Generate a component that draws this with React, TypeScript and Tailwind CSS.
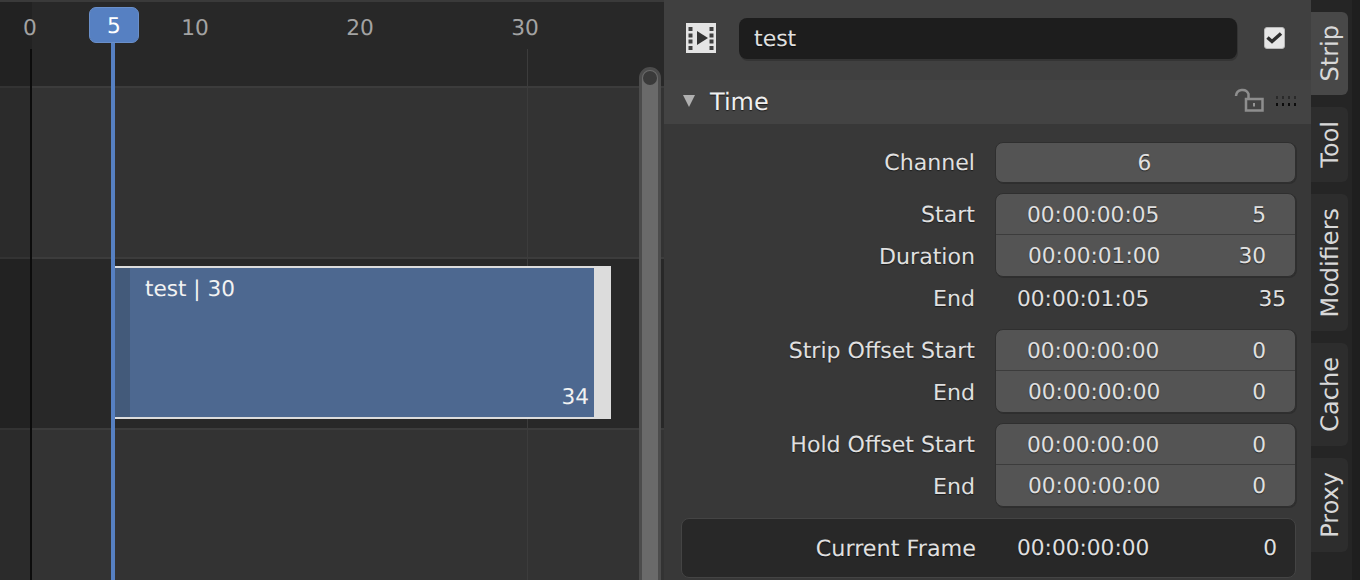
const FONT = "font-['DejaVu_Sans',sans-serif]";

const ticks = [
  { label: '0', left: 'left-[30px]' },
  { label: '10', left: 'left-[195px]' },
  { label: '20', left: 'left-[360px]' },
  { label: '30', left: 'left-[525px]' },
];

const tabs = [
  { name: 'Strip', size: 'h-[83px]', active: true },
  { name: 'Tool', size: 'h-[75px]', active: false },
  { name: 'Modifiers', size: 'h-[137px]', active: false },
  { name: 'Cache', size: 'h-[103px]', active: false },
  { name: 'Proxy', size: 'h-[94px]', active: false },
];

const TEXT = 'text-[#e0e0e0] [text-shadow:0_1px_1px_rgba(0,0,0,0.55)]';

function Label({ children }: { children: string }) {
  return <div className={`w-[331px] shrink-0 pr-[20px] text-right text-[22.1px] ${TEXT}`}>{children}</div>;
}

function Cell({ time, value, second }: { time: string; value: string; second?: boolean }) {
  return (
    <div className={`flex items-center justify-between pr-[29px] ${TEXT} ${second ? 'h-[41px] pl-[32px] pt-[2px]' : 'h-[40px] pl-[31px] pt-[3px]'}`}>
      <span>{time}</span>
      <span>{value}</span>
    </div>
  );
}

function TimeGroup({ rows }: { rows: { label: string; time: string; value: string }[] }) {
  return (
    <div className="flex">
      <div className="flex flex-col">
        {rows.map((r) => (
          <div key={r.label} className="flex h-[42px] items-center pt-[2px]">
            <Label>{r.label}</Label>
          </div>
        ))}
      </div>
      <div className="h-[84px] w-[301px] overflow-hidden rounded-[8px] border border-[#2f2f2f] bg-[#545454] shadow-[1px_1px_0_#2e2e2e]">
        <Cell time={rows[0].time} value={rows[0].value} />
        <div className="h-[1px] bg-[#3c3c3c]" />
        <Cell time={rows[1].time} value={rows[1].value} second />
      </div>
    </div>
  );
}

function FilmIcon() {
  return (
    <svg width="30" height="30" viewBox="0 0 30 30">
      <path
        fill="#e4e4e4"
        fillRule="evenodd"
        d="M0 0h30v30H0zM2.500 4v4h4V4zM2.500 10.500v4h4v-4zM2.500 16.500v4h4v-4zM2.500 23v4h4v-4zM23.500 4v4h4V4zM23.500 10.500v4h4v-4zM23.500 16.500v4h4v-4zM23.500 23v4h4v-4z"
      />
      <path fill="#333333" d="M11 8l11 7-11 7z" />
    </svg>
  );
}

function LockIcon() {
  return (
    <svg width="30" height="26" viewBox="0 0 30 26" fill="none" stroke="#8e8e8e" strokeWidth="2.500">
      <path d="M2 9a6.500 6.500 0 0 1 12.500-2v4" />
      <rect x="12" y="12" width="16.500" height="11.500" />
      <path d="M20 16v3.500" stroke="#b0b0b0" strokeWidth="1.500" />
    </svg>
  );
}

function GripIcon() {
  return (
    <svg width="22" height="13" viewBox="0 0 22 13">
      {[0, 6, 12, 18].map((x) => (
        <g key={x}>
          <rect x={x} y="1" width="2" height="3" fill="#2a2a2a" />
          <rect x={x} y="8" width="2" height="3" fill="#0c0c0c" />
        </g>
      ))}
    </svg>
  );
}

export default function App() {
  return (
    <div className={`flex h-[580px] w-[1360px] overflow-hidden bg-[#383838] text-[21.7px] leading-none [text-rendering:geometricPrecision] ${FONT}`}>
      {/* sequencer timeline */}
      <div className="relative h-full w-[664px] shrink-0 overflow-hidden bg-[#282828]">
        <div className="h-[2px] bg-[#3a3a3a]" />
        <div className="h-[84px] bg-[#282828]" />
        <div className="h-[2px] bg-[#3c3c3c]" />
        <div className="h-[169px] bg-[#333333]" />
        <div className="h-[2px] bg-[#3c3c3c]" />
        <div className="h-[169px] bg-[#282828]" />
        <div className="h-[2px] bg-[#3c3c3c]" />
        <div className="h-[150px] bg-[#333333]" />

        <div className="absolute left-0 top-[2px] h-full w-[32px] bg-black/15" />
        <div className="absolute bottom-0 left-[527px] top-[49px] w-[1px] bg-[#3c3c3c]" />
        <div className="absolute bottom-0 left-[30px] top-[49px] w-[2px] bg-[#0c0c0c]" />

        {ticks.map((t) => (
          <div key={t.label} className={`absolute top-[18px] -translate-x-1/2 text-[#a3a3a3] ${t.left}`}>
            {t.label}
          </div>
        ))}

        {/* strip */}
        <div className="absolute left-[114px] top-[266px] flex h-[153px] w-[497px] border-y-2 border-[#dcdcdc] bg-[#dcdcdc]">
          <div className="h-full w-[16px] bg-[#435a7a]" />
          <div className="relative h-full w-[464px] bg-[#4d6890] text-[21.6px] text-[#f2f2f2]">
            <div className="absolute left-[15px] top-[11px]">test | 30</div>
            <div className="absolute bottom-[8px] right-[5px]">34</div>
          </div>
        </div>

        {/* playhead */}
        <div className="absolute bottom-0 left-[111px] top-[40px] w-[4px] bg-[#5680c2]" />
        <div className="absolute left-[89px] top-[7px] flex h-[36px] w-[50px] items-center justify-center rounded-[7px] border border-[#6a8fc9] bg-[#5680c2] pt-[4px] text-white">
          5
        </div>

        {/* scrollbar */}
        <div className="absolute left-[639px] top-[67px] h-[530px] w-[22px] rounded-full border-[3px] border-[#4c4c4c] bg-[#6a6a6a]">
          <div className="absolute left-[1px] top-[1px] h-[14px] w-[14px] rounded-full bg-[#3a3a3a]" />
        </div>
      </div>

      {/* sidebar */}
      <div className="flex h-full w-[647px] shrink-0 flex-col">
        <div className="flex h-[80px] shrink-0 items-start bg-[#404040]">
          <div className="ml-[22px] mt-[23px]">
            <FilmIcon />
          </div>
          <div className={`ml-[23px] mt-[18px] flex h-[41px] w-[498px] items-center rounded-[8px] bg-[#1d1d1d] pl-[15px] pt-[2px] text-[22px] shadow-[1px_2px_0_#343434] ${TEXT}`}>
            test
          </div>
          <div className="ml-[27px] mt-[27px] flex h-[22px] w-[21px] items-center justify-center rounded-[3px] border border-[#b8b8b8] bg-[#e6e6e6]">
            <svg width="17" height="12" viewBox="0 0 17 12" fill="none" stroke="#2e2e2e" strokeWidth="3.500">
              <path d="M1.500 5.500l4.500 4 9-8" />
            </svg>
          </div>
        </div>

        <div className="relative flex h-[44px] shrink-0 items-center bg-[#434343] pl-[46px] text-[24px] text-[#f0f0f0] [text-shadow:0_1px_1px_rgba(0,0,0,0.6)]">
          <svg className="absolute left-[19px] top-[15px]" width="12" height="12" viewBox="0 0 12 12">
            <path fill="#b0b0b0" d="M0 0h12l-6 12z" />
          </svg>
          Time
          <div className="absolute left-[570px] top-[7px]">
            <LockIcon />
          </div>
          <div className="absolute left-[612px] top-[15px]">
            <GripIcon />
          </div>
        </div>

        <div className="flex flex-1 flex-col pt-[18px]">
          <div className="flex h-[41px] items-center">
            <div className="pt-[2px]">
              <Label>Channel</Label>
            </div>
            <div className={`flex h-[41px] w-[301px] items-center justify-center rounded-[8px] border border-[#2f2f2f] bg-[#545454] pr-[2px] pt-[2px] shadow-[1px_1px_0_#2e2e2e] ${TEXT}`}>
              6
            </div>
          </div>
          <div className="mt-[10px]">
            <TimeGroup
              rows={[
                { label: 'Start', time: '00:00:00:05', value: '5' },
                { label: 'Duration', time: '00:00:01:00', value: '30' },
              ]}
            />
          </div>
          <div className="flex h-[42px] items-center pt-[3px]">
            <Label>End</Label>
            <div className={`flex w-[301px] justify-between pl-[22px] pr-[10px] ${TEXT}`}>
              <span>00:00:01:05</span>
              <span>35</span>
            </div>
          </div>
          <div className="mt-[10px]">
            <TimeGroup
              rows={[
                { label: 'Strip Offset Start', time: '00:00:00:00', value: '0' },
                { label: 'End', time: '00:00:00:00', value: '0' },
              ]}
            />
          </div>
          <div className="mt-[10px]">
            <TimeGroup
              rows={[
                { label: 'Hold Offset Start', time: '00:00:00:00', value: '0' },
                { label: 'End', time: '00:00:00:00', value: '0' },
              ]}
            />
          </div>
          <div className="ml-[17px] mt-[11px] flex h-[60px] w-[615px] items-center rounded-[8px] border border-[#444444] bg-[#282828] pt-[2px]">
            <div className={`w-[294px] shrink-0 text-right text-[22.3px] ${TEXT}`}>Current Frame</div>
            <div className={`ml-[41px] flex flex-1 justify-between pr-[18px] ${TEXT}`}>
              <span>00:00:00:00</span>
              <span>0</span>
            </div>
          </div>
        </div>
      </div>

      {/* tab column */}
      <div className="flex h-full flex-1 flex-col gap-[12px] border-r-[8px] border-[#1f1f1f] bg-[#252525] pt-[12px]">
        {tabs.map((tab) => (
          <div
            key={tab.name}
            className={`flex w-[37px] items-center justify-center rounded-r-[6px] text-[24px] ${tab.size} ${tab.active ? 'bg-[#484848]' : 'bg-[#2d2d2d]'}`}
          >
            <span className="rotate-180 text-[#d8d8d8] [writing-mode:vertical-rl]">{tab.name}</span>
          </div>
        ))}
      </div>
    </div>
  );
}
